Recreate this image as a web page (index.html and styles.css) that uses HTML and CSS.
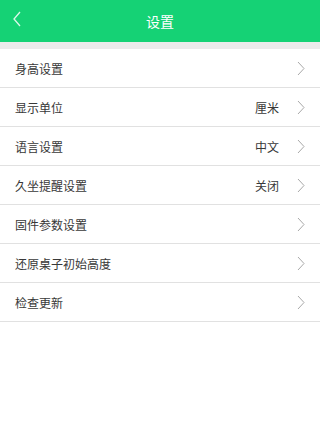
FILE: index.html
```html
<!DOCTYPE html>
<html lang="zh">
<head>
<meta charset="utf-8">
<title>设置</title>
<link rel="stylesheet" href="styles.css">
</head>
<body>
<header class="topbar">
  <span class="back">
    <svg width="8" height="16" viewBox="0 0 8 16"><polyline points="7,1 1,8 7,15" fill="none" stroke="currentColor" stroke-width="1.3"/></svg>
  </span>
  <h1 class="title">设置</h1>
</header>
<div class="band"></div>
<ul class="list">
  <li class="row"><span class="label">身高设置</span><span class="value"></span><span class="chev"><svg width="8" height="15" viewBox="0 0 8 15"><polyline points="1,1 7,7.5 1,14" fill="none" stroke="currentColor" stroke-width="1"/></svg></span></li>
  <li class="row"><span class="label">显示单位</span><span class="value">厘米</span><span class="chev"><svg width="8" height="15" viewBox="0 0 8 15"><polyline points="1,1 7,7.5 1,14" fill="none" stroke="currentColor" stroke-width="1"/></svg></span></li>
  <li class="row"><span class="label">语言设置</span><span class="value">中文</span><span class="chev"><svg width="8" height="15" viewBox="0 0 8 15"><polyline points="1,1 7,7.5 1,14" fill="none" stroke="currentColor" stroke-width="1"/></svg></span></li>
  <li class="row"><span class="label">久坐提醒设置</span><span class="value">关闭</span><span class="chev"><svg width="8" height="15" viewBox="0 0 8 15"><polyline points="1,1 7,7.5 1,14" fill="none" stroke="currentColor" stroke-width="1"/></svg></span></li>
  <li class="row"><span class="label">固件参数设置</span><span class="value"></span><span class="chev"><svg width="8" height="15" viewBox="0 0 8 15"><polyline points="1,1 7,7.5 1,14" fill="none" stroke="currentColor" stroke-width="1"/></svg></span></li>
  <li class="row"><span class="label">还原桌子初始高度</span><span class="value"></span><span class="chev"><svg width="8" height="15" viewBox="0 0 8 15"><polyline points="1,1 7,7.5 1,14" fill="none" stroke="currentColor" stroke-width="1"/></svg></span></li>
  <li class="row"><span class="label">检查更新</span><span class="value"></span><span class="chev"><svg width="8" height="15" viewBox="0 0 8 15"><polyline points="1,1 7,7.5 1,14" fill="none" stroke="currentColor" stroke-width="1"/></svg></span></li>
</ul>
</body>
</html>
```
FILE: styles.css
```css
html, body {
  margin: 0;
  padding: 0;
  background: #ffffff;
  font-family: "Noto Sans CJK SC", "Noto Sans", sans-serif;
}
.topbar {
  height: 42px;
  background: #15d275;
  display: flex;
  align-items: center;
  justify-content: center;
  position: relative;
}
.back {
  position: absolute;
  left: 13px;
  top: 11px;
  color: rgba(255, 255, 255, 0.85);
  display: flex;
}
.title {
  margin: 0;
  font-size: 14px;
  font-weight: normal;
  color: #ffffff;
  line-height: 1;
}
.band {
  height: 7px;
  background: #ebebeb;
}
.list {
  list-style: none;
  margin: 0;
  padding: 0;
}
.row {
  height: 38px;
  border-bottom: 1px solid #e1e1e1;
  display: flex;
  align-items: center;
  padding: 0 15px 0 15px;
  font-size: 12px;
  color: #383838;
}
.label {
  flex: 1;
}
.value {
  margin-right: 18px;
}
.chev {
  display: flex;
  color: #a9a9a9;
}
```
